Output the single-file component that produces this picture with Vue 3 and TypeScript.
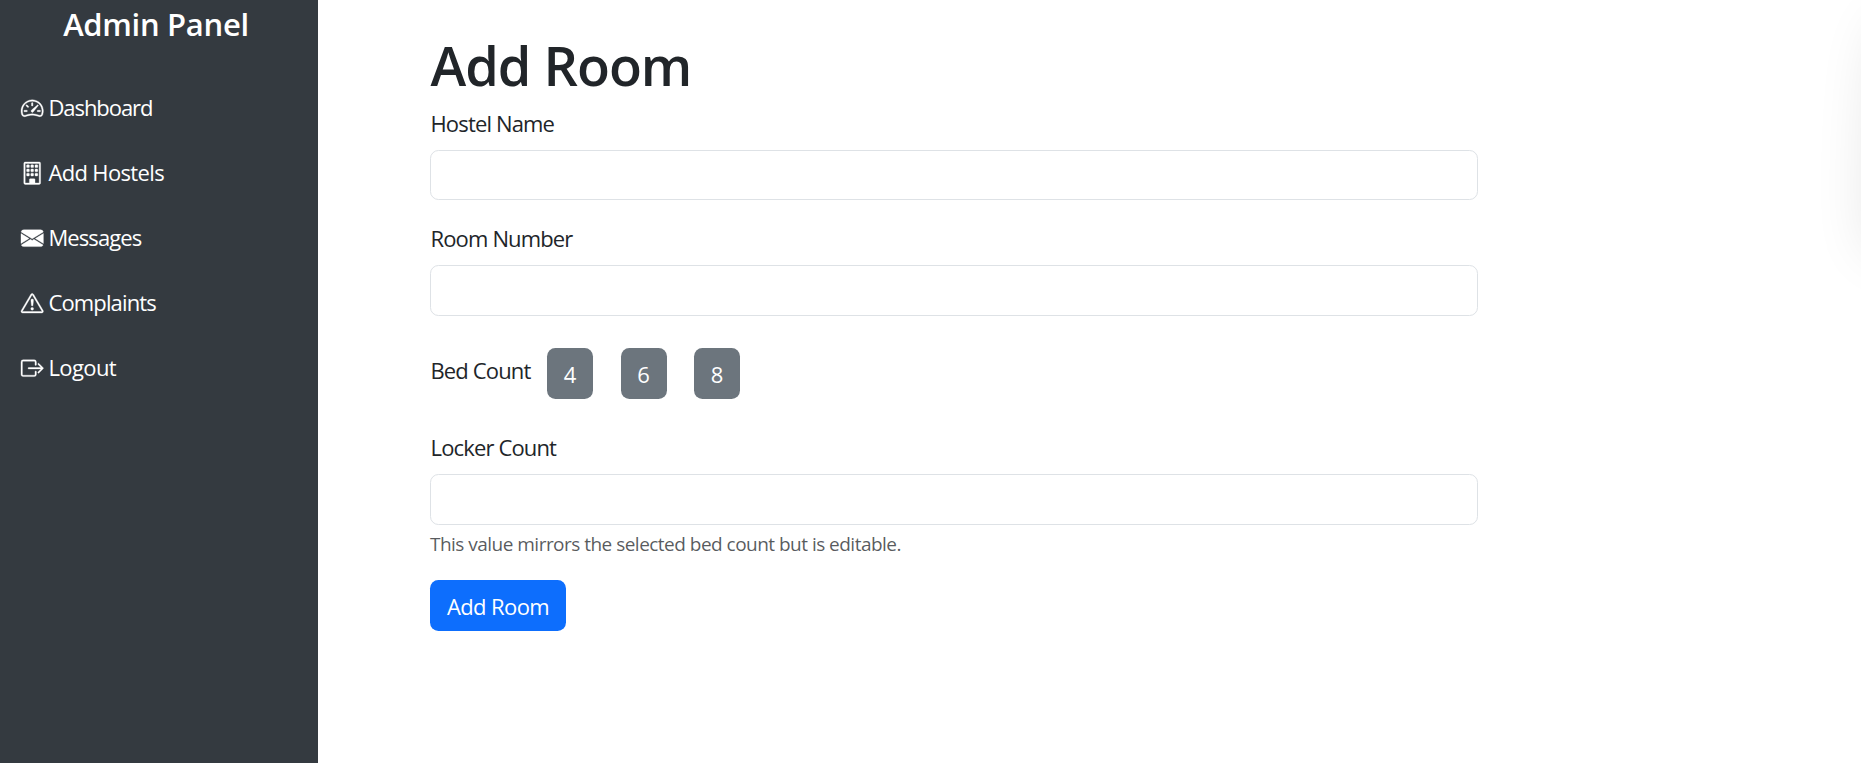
<script setup lang="ts">
import { ref } from 'vue'

interface NavItem {
  label: string
  slug: string
  paths: string[]
}

const navItems: NavItem[] = [
  {
    label: 'Dashboard',
    slug: 'dashboard',
    paths: [
      'M8 4a.5.5 0 0 1 .5.5V6a.5.5 0 0 1-1 0V4.500A.5.5 0 0 1 8 4M3.732 5.732a.5.5 0 0 1 .707 0l.915.914a.5.5 0 1 1-.708.708l-.914-.915a.5.5 0 0 1 0-.707M2 10a.5.5 0 0 1 .5-.5h1.586a.5.5 0 0 1 0 1H2.500A.5.5 0 0 1 2 10m9.500 0a.5.5 0 0 1 .5-.5h1.500a.5.5 0 0 1 0 1H12a.5.5 0 0 1-.5-.5m.754-4.246a.39.39 0 0 0-.527-.02L7.547 9.310a.91.91 0 1 0 1.302 1.258l3.434-4.297a.39.39 0 0 0-.029-.518z',
      'M0 10a8 8 0 1 1 15.547 2.661c-.442 1.253-1.845 1.602-2.932 1.250C11.309 13.488 9.475 13 8 13c-1.474 0-3.310.488-4.615.911-1.087.352-2.490.003-2.932-1.250A8 8 0 0 1 0 10m8-7a7 7 0 0 0-6.603 9.329c.203.575.923.876 1.680.630C4.397 12.533 6.358 12 8 12s3.604.532 4.923.960c.757.245 1.477-.056 1.680-.631A7 7 0 0 0 8 3',
    ],
  },
  {
    label: 'Add Hostels',
    slug: 'hostels',
    paths: [
      'M4 2.500a.5.5 0 0 1 .5-.5h1a.5.5 0 0 1 .5.5v1a.5.5 0 0 1-.5.5h-1a.5.5 0 0 1-.5-.5zm3 0a.5.5 0 0 1 .5-.5h1a.5.5 0 0 1 .5.5v1a.5.5 0 0 1-.5.5h-1a.5.5 0 0 1-.5-.5zm3.500-.5a.5.5 0 0 0-.5.5v1a.5.5 0 0 0 .5.5h1a.5.5 0 0 0 .5-.5v-1a.5.5 0 0 0-.5-.5zM4 5.500a.5.5 0 0 1 .5-.5h1a.5.5 0 0 1 .5.5v1a.5.5 0 0 1-.5.5h-1a.5.5 0 0 1-.5-.5zM7.500 5a.5.5 0 0 0-.5.5v1a.5.5 0 0 0 .5.5h1a.5.5 0 0 0 .5-.5v-1a.5.5 0 0 0-.5-.5zm2.500.5a.5.5 0 0 1 .5-.5h1a.5.5 0 0 1 .5.5v1a.5.5 0 0 1-.5.5h-1a.5.5 0 0 1-.5-.5zM4.500 8a.5.5 0 0 0-.5.5v1a.5.5 0 0 0 .5.5h1a.5.5 0 0 0 .5-.5v-1a.5.5 0 0 0-.5-.5zm2.500.5a.5.5 0 0 1 .5-.5h1a.5.5 0 0 1 .5.5v1a.5.5 0 0 1-.5.5h-1a.5.5 0 0 1-.5-.5zm3.500-.5a.5.5 0 0 0-.5.5v1a.5.5 0 0 0 .5.5h1a.5.5 0 0 0 .5-.5v-1a.5.5 0 0 0-.5-.5z',
      'M2 1a1 1 0 0 1 1-1h10a1 1 0 0 1 1 1v14a1 1 0 0 1-1 1H3a1 1 0 0 1-1-1zm11 0H3v14h3v-2.500a.5.5 0 0 1 .5-.5h3a.5.5 0 0 1 .5.5V15h3z',
    ],
  },
  {
    label: 'Messages',
    slug: 'messages',
    paths: [
      'M.05 3.555A2 2 0 0 1 2 2h12a2 2 0 0 1 1.950 1.555L8 8.414zM0 4.697v7.104l5.803-3.558zM6.761 8.830l-6.570 4.027A2 2 0 0 0 2 14h12a2 2 0 0 0 1.808-1.144l-6.570-4.027L8 9.586zm3.436-.586L16 11.801V4.697z',
    ],
  },
  {
    label: 'Complaints',
    slug: 'complaints',
    paths: [
      'M7.938 2.016A.13.13 0 0 1 8.002 2a.13.13 0 0 1 .063.016.15.15 0 0 1 .054.057l6.857 11.667c.036.060.035.124.002.183a.2.2 0 0 1-.054.060.1.1 0 0 1-.066.017H1.146a.1.1 0 0 1-.066-.017.2.2 0 0 1-.054-.060.18.18 0 0 1 .002-.183L7.884 2.073a.15.15 0 0 1 .054-.057m1.044-.450a1.130 1.130 0 0 0-1.960 0L.165 13.233c-.457.778.091 1.767.980 1.767h13.713c.889 0 1.438-.990.980-1.767z',
      'M7.002 12a1 1 0 1 1 2 0 1 1 0 0 1-2 0M7.100 5.995a.905.905 0 1 1 1.800 0l-.350 3.507a.552.552 0 0 1-1.100 0z',
    ],
  },
  {
    label: 'Logout',
    slug: 'logout',
    paths: [
      'M10 12.500a.5.5 0 0 1-.5.5h-8a.5.5 0 0 1-.5-.5v-9a.5.5 0 0 1 .5-.5h8a.5.5 0 0 1 .5.5v2a.5.5 0 0 0 1 0v-2A1.500 1.500 0 0 0 9.500 2h-8A1.500 1.500 0 0 0 0 3.500v9A1.500 1.500 0 0 0 1.500 14h8a1.500 1.500 0 0 0 1.500-1.500v-2a.5.5 0 0 0-1 0z',
      'M15.854 8.354a.5.5 0 0 0 0-.708l-3-3a.5.5 0 0 0-.708.708L14.293 7.500H5.500a.5.5 0 0 0 0 1h8.793l-2.147 2.146a.5.5 0 0 0 .708.708z',
    ],
  },
]

const bedOptions = [4, 6, 8]
const hostelName = ref('')
const roomNumber = ref('')
const lockerCount = ref('')

function selectBeds(count: number) {
  lockerCount.value = String(count)
}
</script>

<template>
  <div class="layout">
    <aside class="sidebar">
      <h2 class="brand">Admin Panel</h2>
      <nav>
        <a v-for="item in navItems" :key="item.slug" class="nav-link" href="#">
          <svg viewBox="0 0 16 16" fill="currentColor" fill-rule="evenodd" aria-hidden="true">
            <path v-for="(d, i) in item.paths" :key="i" :d="d" />
          </svg>
          <span :class="item.slug">{{ item.label }}</span>
        </a>
      </nav>
    </aside>

    <main class="content">
      <h1>Add Room</h1>
      <form @submit.prevent>
        <label class="hostel-label" for="hostel">Hostel Name</label>
        <input id="hostel" v-model="hostelName" class="first" type="text" />
        <label class="room-label" for="room">Room Number</label>
        <input id="room" v-model="roomNumber" type="text" />
        <div class="beds">
          <span class="beds-label">Bed Count</span>
          <button v-for="n in bedOptions" :key="n" type="button" class="bed" @click="selectBeds(n)">{{ n }}</button>
        </div>
        <label class="locker-label" for="lockers">Locker Count</label>
        <input id="lockers" v-model="lockerCount" type="text" />
        <p class="hint">This value mirrors the selected bed count but is editable.</p>
        <button type="submit" class="submit">Add Room</button>
      </form>
    </main>
    <div class="edge-shadow"></div>
  </div>
</template>

<style>
body {
  margin: 0;
  background: #fff;
}
</style>

<style scoped>
.layout {
  position: relative;
  display: flex;
  height: 763px;
  overflow: hidden;
  font-family: 'Segoe UI', 'Open Sans', 'Noto Sans', sans-serif;
  font-size: 22px;
  line-height: 34px;
  color: #212529;
}

.sidebar {
  box-sizing: border-box;
  width: 318px;
  flex: none;
  background: #343a40;
  color: #fff;
}

.brand {
  margin: 5px 6px 48px 0;
  font-size: 31px;
  line-height: 38px;
  font-weight: 600;
  text-align: center;
  letter-spacing: -0.3px;
}

.nav-link {
  display: flex;
  align-items: center;
  gap: 5px;
  height: 34px;
  padding: 0 0 0 21px;
  margin-bottom: 31px;
  color: #fff;
  text-decoration: none;
}

.nav-link span {
  margin-top: -2px;
}

.nav-link svg {
  width: 22.4px;
  height: 22.4px;
  flex: none;
  overflow: visible;
  stroke: currentColor;
  stroke-width: 0.25;
}

.dashboard {
  letter-spacing: -1.05px;
}

.hostels {
  letter-spacing: -0.65px;
}

.messages {
  letter-spacing: -0.9px;
}

.complaints {
  letter-spacing: -0.85px;
}

.logout {
  letter-spacing: -0.6px;
}

.content {
  width: 1048px;
  margin-left: 112px;
}

h1 {
  margin: 32px 0 7px;
  font-size: 54px;
  line-height: 67px;
  font-weight: 600;
  letter-spacing: -1px;
  text-indent: 0.5px;
}

form {
  display: flex;
  flex-direction: column;
  align-items: flex-start;
}

label,
.beds-label {
  letter-spacing: -0.85px;
  text-indent: 0.5px;
}

input {
  box-sizing: border-box;
  width: 100%;
  height: 51px;
  margin: 10px 0 21px;
  padding: 8px 17px;
  border: 1px solid #dee2e6;
  border-radius: 8.4px;
  background: #fff;
  font: inherit;
  outline: none;
}

input.first {
  height: 50px;
}

.beds {
  display: flex;
  align-items: center;
  margin: 11px 0 31px;
}

.beds-label {
  width: 117px;
  margin-top: -7px;
}

.bed,
.submit {
  height: 51px;
  padding: 0;
  border: 0;
  border-radius: 8.4px;
  color: #fff;
  font: inherit;
}

.bed {
  width: 46px;
  margin-right: 27.500px;
  background: #6c757d;
}

.hint {
  margin: -17px 0 21px;
  font-size: 19px;
  line-height: 30px;
  color: rgba(33, 37, 41, 0.75);
  letter-spacing: -0.52px;
}

.submit {
  width: 136px;
  background: #0d6efd;
  letter-spacing: -0.6px;
}

.edge-shadow {
  position: absolute;
  left: 1869px;
  top: 20px;
  width: 120px;
  height: 232px;
  border-radius: 20px 0 0 0 / 180px 0 0 0;
  box-shadow: 0 0 56px rgba(0, 0, 0, 0.11);
}
</style>
